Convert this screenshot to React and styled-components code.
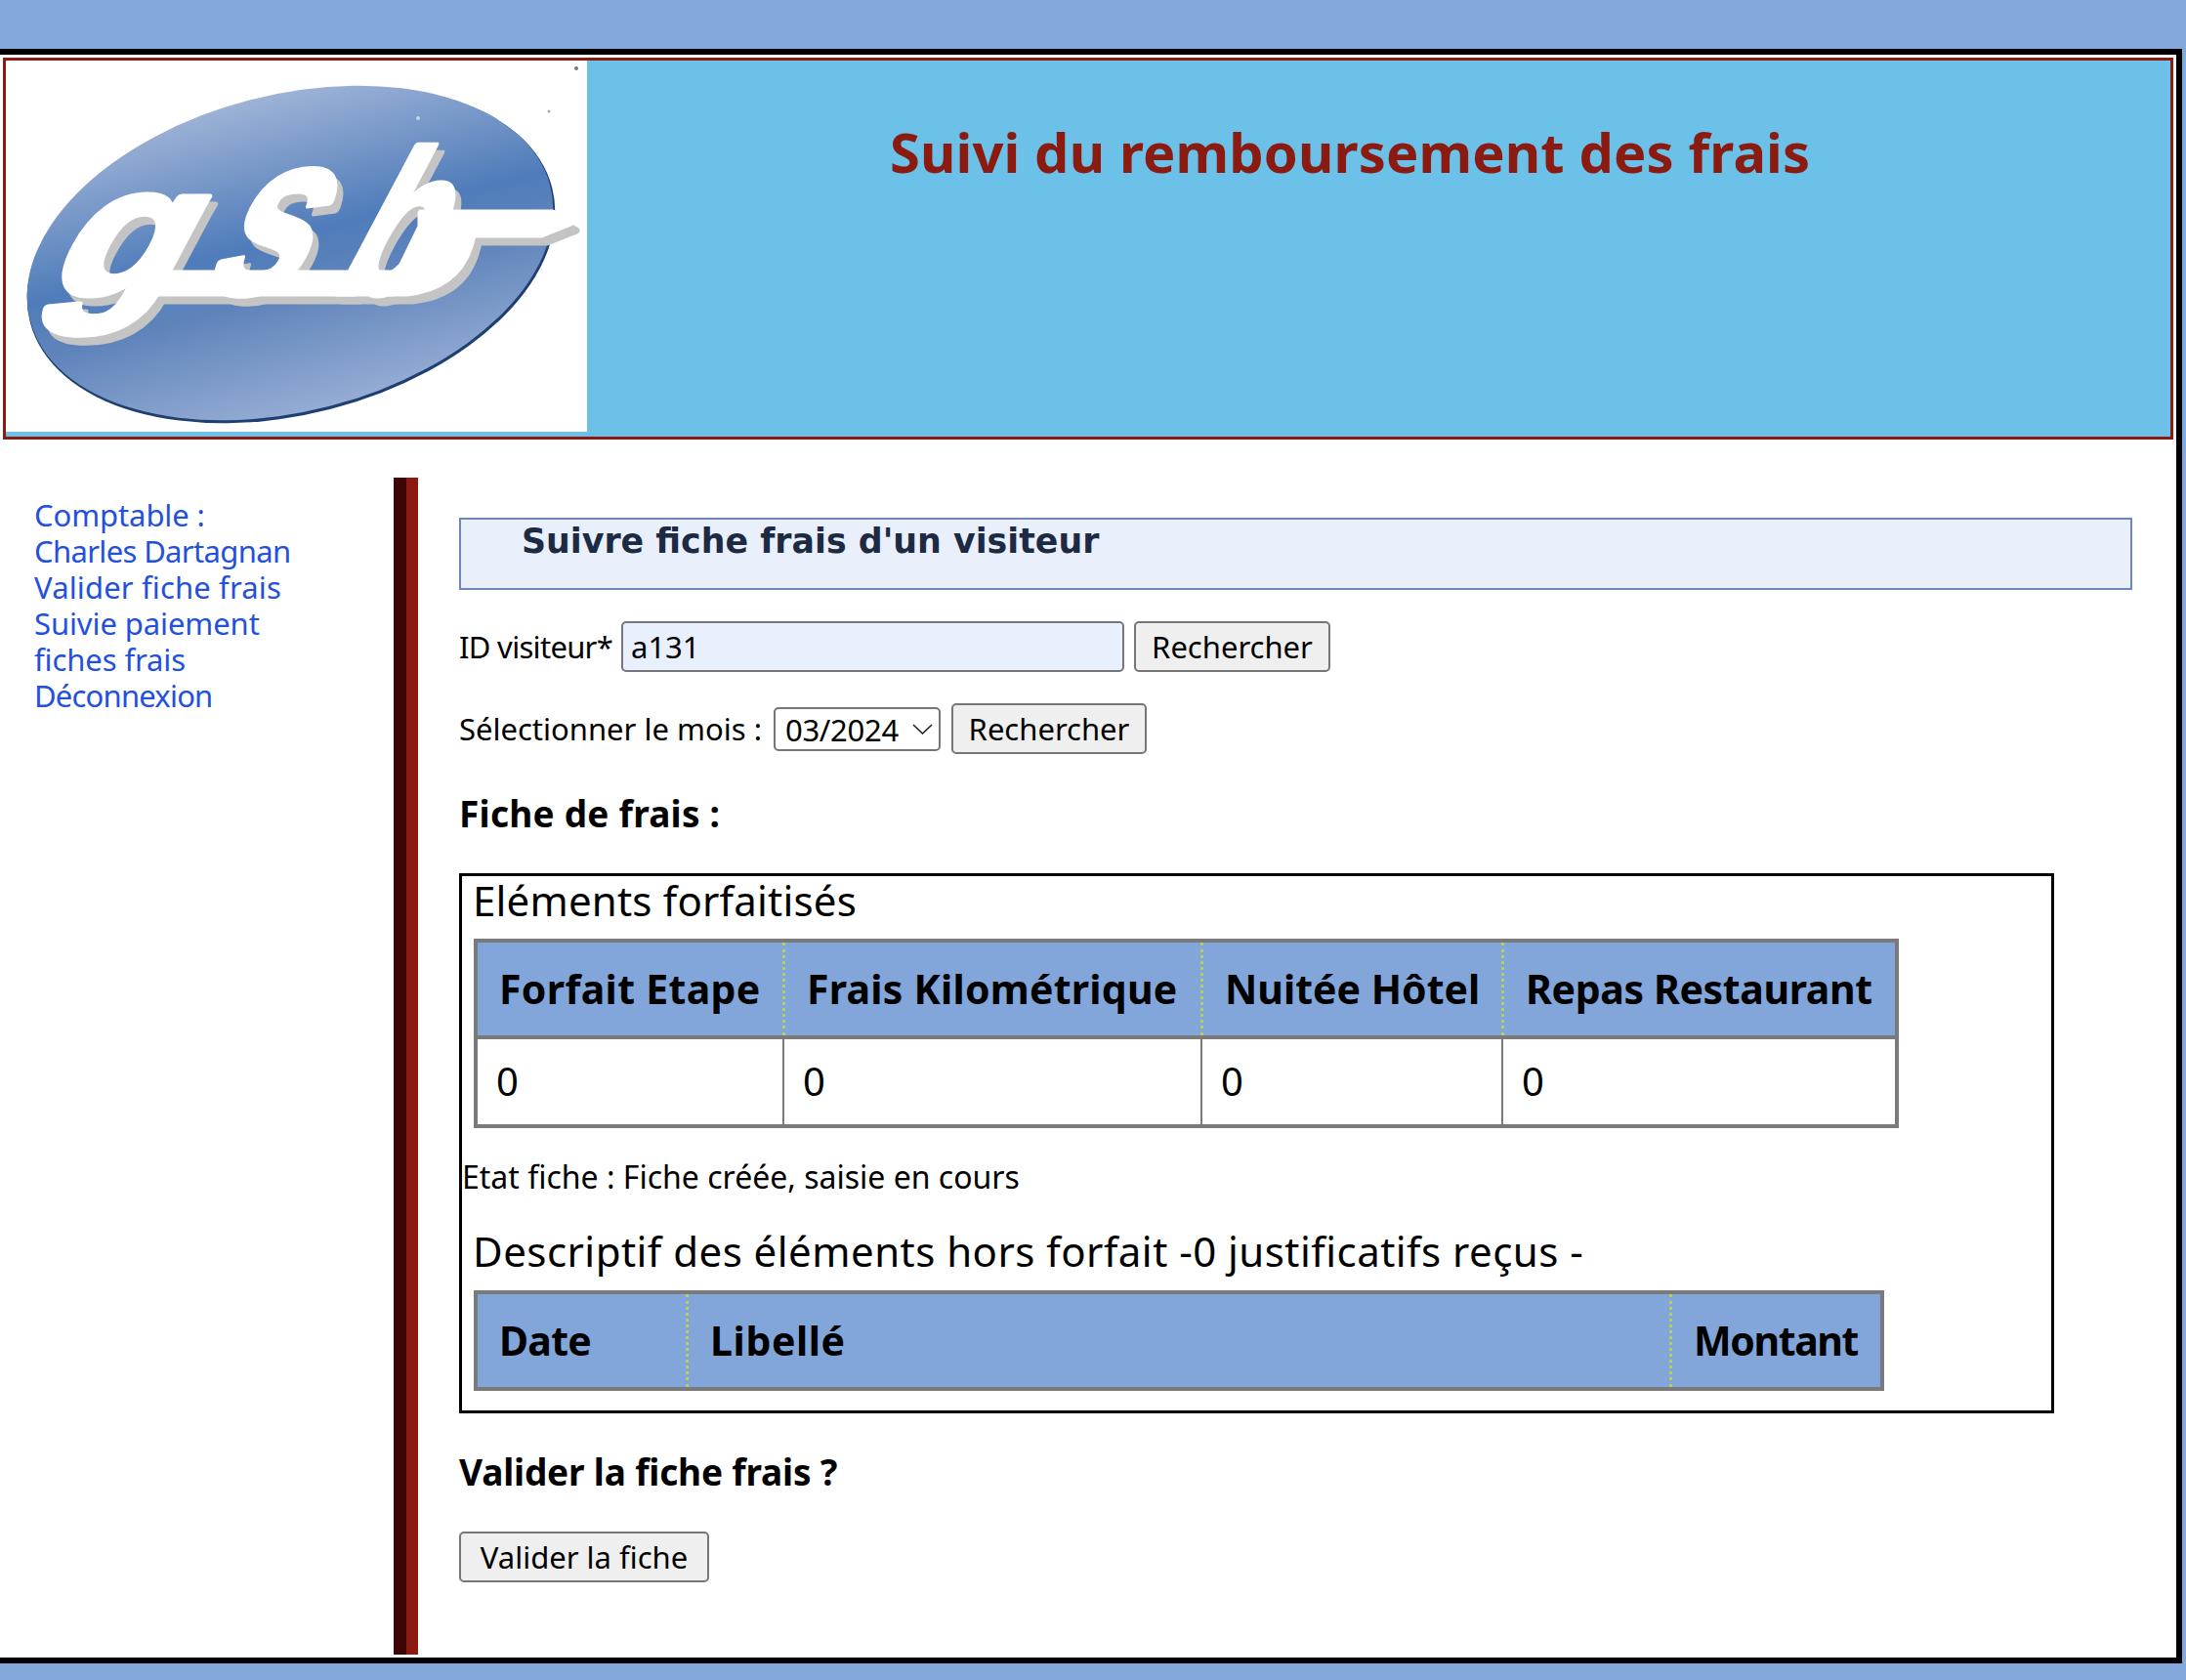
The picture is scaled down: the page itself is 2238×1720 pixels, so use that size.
import React from 'react';
import styled, { createGlobalStyle } from 'styled-components';

const FONT = '"Noto Sans", "Open Sans", sans-serif';

const CHEVRON = "url(\"data:image/svg+xml,%3Csvg xmlns='http://www.w3.org/2000/svg' width='21' height='11' viewBox='0 0 21 11'%3E%3Cpath d='M1 1l9.5 9L20 1' fill='none' stroke='%23222' stroke-width='1.6'/%3E%3C/svg%3E\")";

const GlobalStyle = createGlobalStyle`
  html, body {
    margin: 0;
    height: 100%;
    overflow: hidden;
    background: #84a8dc;
    font-family: ${FONT};
    color: #000;
  }
`;

const Page = styled.div`
  padding-top: 50px;
`;

const Frame = styled.div`
  box-sizing: border-box;
  width: 2234px;
  height: 1653px;
  padding-top: 3px;
  border: solid #000;
  border-width: 6px 6px 6px 0;
  background: #fff;
`;

const Header = styled.header`
  box-sizing: border-box;
  display: flex;
  align-items: flex-start;
  width: 2222px;
  height: 391px;
  margin-left: 3px;
  border: 3px solid #8b1a10;
  background: #6cc1e9;
`;

const LogoBox = styled.div`
  flex: none;
  width: 595px;
  height: 380px;
  background: #fff;
`;

const Title = styled.h1`
  margin: 59px 0 0 310px;
  font-size: 56px;
  letter-spacing: 0.14px;
  line-height: 68px;
  font-weight: 700;
  color: #8b1a10;
  white-space: nowrap;
`;

const Body = styled.div`
  display: flex;
  margin-top: 39px;
`;

const Sidebar = styled.nav`
  box-sizing: border-box;
  flex: none;
  width: 403px;
  padding: 20px 70px 0 35px;
  font-size: 31px;
  line-height: 37px;
`;

const MenuLine = styled.a`
  display: block;
  color: #2350dc;
  text-decoration: none;
  letter-spacing: ${p => p.$ls || 0}px;
`;

const Rule = styled.div`
  flex: none;
  box-sizing: border-box;
  width: 25px;
  height: 1205px;
  border-left: 13px solid #3d0503;
  background: #8b1a10;
`;

const Content = styled.main`
  margin-left: 42px;
  padding-top: 41px;
`;

const PageHeading = styled.h2`
  box-sizing: border-box;
  width: 1713px;
  height: 74px;
  margin: 0;
  padding: 1px 0 0 62px;
  border: 2px solid #6d86bc;
  background: #e9effb;
  font-family: "DejaVu Sans", sans-serif;
  font-size: 34.8px;
  line-height: 42px;
  font-weight: 700;
  color: #1c2a44;
`;

const FormRow = styled.div`
  display: flex;
  align-items: center;
  height: 52px;
  margin-top: ${p => p.$top}px;
  font-size: 31px;
  white-space: nowrap;
`;

const FieldLabel = styled.label`
  flex: none;
  width: ${p => p.$w}px;
  letter-spacing: ${p => p.$ls || 0}px;
`;

const TextInput = styled.input`
  box-sizing: border-box;
  width: 515px;
  height: 52px;
  padding: 0 8px;
  border: 2px solid #767676;
  border-radius: 5px;
  background: #e8f0fe;
  font-family: ${FONT};
  font-size: 31px;
  color: #000;
`;

const MonthSelect = styled.select`
  box-sizing: border-box;
  appearance: none;
  width: 171px;
  height: 45px;
  padding: 0 0 0 10px;
  border: 2px solid #767676;
  border-radius: 5px;
  background: #fff ${CHEVRON} no-repeat 140px 15px;
  font-family: ${FONT};
  font-size: 31px;
  letter-spacing: -0.3px;
  color: #000;
`;

const Button = styled.button`
  box-sizing: border-box;
  width: ${p => p.$w}px;
  height: 52px;
  margin-left: ${p => p.$left}px;
  padding: 0;
  border: 2px solid #767676;
  border-radius: 5px;
  background: #efefef;
  font-family: ${FONT};
  font-size: 31px;
  color: #000;
`;

const SectionTitle = styled.h3`
  margin: ${p => p.$top}px 0 0;
  font-size: 37px;
  letter-spacing: ${p => p.$ls || 0}px;
  line-height: 40px;
  font-weight: 700;
`;

const SheetBox = styled.section`
  box-sizing: border-box;
  width: 1633px;
  height: 553px;
  margin-top: 41px;
  border: 3px solid #000;
`;

const BoxTitle = styled.div`
  margin: ${p => p.$top}px 0 0 11px;
  font-size: 42px;
  letter-spacing: ${p => p.$ls}px;
  line-height: 50px;
`;

const FeeTable = styled.table`
  box-sizing: border-box;
  table-layout: fixed;
  width: ${p => p.$w}px;
  margin: ${p => p.$top}px 0 0 12px;
  border: 4px solid #7a7a7a;
  border-collapse: separate;
  border-spacing: 0;
`;

const Col = styled.col`
  width: ${p => p.$w}px;
`;

const HeadCell = styled.th`
  box-sizing: border-box;
  height: 95px;
  padding: 0 0 2px 22px;
  background: #82a6da;
  border-left: ${p => (p.$first ? '0' : '3px dotted #b7d05c')};
  text-align: left;
  font-size: 41px;
  letter-spacing: ${p => p.$ls}px;
  font-weight: 700;
  white-space: nowrap;
`;

const ValueCell = styled.td`
  box-sizing: border-box;
  height: 91px;
  padding: 0 0 2px 19px;
  border-top: 4px solid #7a7a7a;
  border-left: ${p => (p.$first ? '0' : '2px solid #7a7a7a')};
  font-size: 40px;
`;

const StateLine = styled.p`
  margin: 30px 0 0;
  font-size: 32px;
  line-height: 40px;
`;

const ActionRow = styled.div`
  margin-top: 41px;
`;

const FORFAITS = [
  { label: 'Forfait Etape', w: 312, ls: 0.33 },
  { label: 'Frais Kilométrique', w: 428, ls: 0.24 },
  { label: 'Nuitée Hôtel', w: 308, ls: 0 },
  { label: 'Repas Restaurant', w: 403, ls: -0.36 },
];

const HORS_FORFAIT = [
  { label: 'Date', w: 213, ls: -0.7 },
  { label: 'Libellé', w: 1007, ls: 0.6 },
  { label: 'Montant', w: 216, ls: -1.4 },
];

// letter shapes of the logo, drawn twice: grey shadow, then white
const LogoMark = ({ fill, dx = 0, dy = 0 }) => (
  <g fill={fill} stroke={fill} strokeWidth="7" strokeLinejoin="round" transform={`translate(${dx} ${dy})`} fontFamily="'Liberation Sans', sans-serif" fontWeight="700">
    <text transform="translate(36 240) skewX(-28) scale(1.2 1.05)" fontSize="180">g</text>
    <text transform="translate(196 238) skewX(-28) scale(0.74 1)" fontSize="235">s</text>
    <text transform="translate(330 238) skewX(-28) scale(0.7 1)" fontSize="208">b</text>
    <path d="M137 218 H402 L396 238 H150 Q140 232 137 218 Z" />
    <path d="M425 156 H560 L578 166 L548 178 H478 Q468 232 410 238 L392 238 L425 170 Z" />
  </g>
);

const GsbLogo = () => (
  <svg width="595" height="380" viewBox="0 0 595 380" aria-label="gsb">
    <defs>
      <linearGradient id="oval" x1="0" y1="25" x2="0" y2="370" gradientUnits="userSpaceOnUse">
        <stop offset="0" stopColor="#a3b6d8" />
        <stop offset="0.45" stopColor="#4f7cba" />
        <stop offset="0.62" stopColor="#5f84bb" />
        <stop offset="1" stopColor="#9ab0d6" />
      </linearGradient>
    </defs>
    <circle cx="584" cy="8" r="2" fill="#777" />
    <circle cx="556" cy="52" r="1.5" fill="#aaa" />
    <ellipse cx="292" cy="199" rx="276" ry="163" transform="rotate(-14.5 292 199)" fill="#1f3f70" />
    <ellipse cx="291" cy="197" rx="275" ry="162" transform="rotate(-14.5 291 197)" fill="url(#oval)" />
    <circle cx="422" cy="59" r="2" fill="#c5d2e6" />
    <LogoMark fill="#c4c4c4" dx={6} dy={8} />
    <LogoMark fill="#fff" />
  </svg>
);

const App = () => (
  <Page>
    <GlobalStyle />
    <Frame>
      <Header>
        <LogoBox>
          <GsbLogo />
        </LogoBox>
        <Title>Suivi du remboursement des frais</Title>
      </Header>
      <Body>
        <Sidebar>
          <MenuLine href="#" $ls={-0.1}>Comptable :</MenuLine>
          <MenuLine href="#" $ls={-0.65}>Charles Dartagnan</MenuLine>
          <MenuLine href="#" $ls={0.15}>Valider fiche frais</MenuLine>
          <MenuLine href="#" $ls={-0.1}>Suivie paiement fiches frais</MenuLine>
          <MenuLine href="#" $ls={-0.8}>Déconnexion</MenuLine>
        </Sidebar>
        <Rule />
        <Content>
          <PageHeading>Suivre fiche frais d'un visiteur</PageHeading>
          <FormRow $top={32}>
            <FieldLabel $w={166} $ls={-0.7}>ID visiteur*</FieldLabel>
            <TextInput defaultValue="a131" />
            <Button $w={201} $left={10}>Rechercher</Button>
          </FormRow>
          <FormRow $top={32}>
            <FieldLabel $w={322}>Sélectionner le mois :</FieldLabel>
            <MonthSelect defaultValue="03/2024">
              <option>03/2024</option>
            </MonthSelect>
            <Button $w={200} $left={11}>Rechercher</Button>
          </FormRow>
          <SectionTitle $top={41} $ls={0.25}>Fiche de frais :</SectionTitle>
          <SheetBox>
            <BoxTitle $top={0} $ls={0.2}>Eléments forfaitisés</BoxTitle>
            <FeeTable $w={1459} $top={14}>
              <colgroup>
                {FORFAITS.map(c => <Col key={c.label} $w={c.w} />)}
              </colgroup>
              <thead>
                <tr>
                  {FORFAITS.map((c, i) => <HeadCell key={c.label} $first={i === 0} $ls={c.ls}>{c.label}</HeadCell>)}
                </tr>
              </thead>
              <tbody>
                <tr>
                  {FORFAITS.map((c, i) => <ValueCell key={c.label} $first={i === 0}>0</ValueCell>)}
                </tr>
              </tbody>
            </FeeTable>
            <StateLine>Etat fiche : Fiche créée, saisie en cours</StateLine>
            <BoxTitle $top={31} $ls={0.47}>Descriptif des éléments hors forfait -0 justificatifs reçus -</BoxTitle>
            <FeeTable $w={1444} $top={15}>
              <colgroup>
                {HORS_FORFAIT.map(c => <Col key={c.label} $w={c.w} />)}
              </colgroup>
              <thead>
                <tr>
                  {HORS_FORFAIT.map((c, i) => <HeadCell key={c.label} $first={i === 0} $ls={c.ls}>{c.label}</HeadCell>)}
                </tr>
              </thead>
            </FeeTable>
          </SheetBox>
          <SectionTitle $top={40} $ls={-0.17}>Valider la fiche frais ?</SectionTitle>
          <ActionRow>
            <Button $w={256} $left={0}>Valider la fiche</Button>
          </ActionRow>
        </Content>
      </Body>
    </Frame>
  </Page>
);

export default App;
